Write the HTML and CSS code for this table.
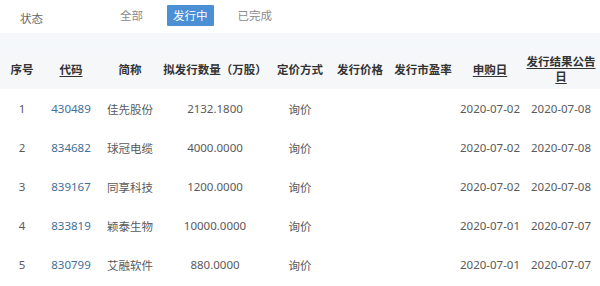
FILE: index.html
```html
<!DOCTYPE html>
<html lang="zh-CN">
<head>
<meta charset="utf-8">
<link rel="stylesheet" href="styles.css">
</head>
<body>
<div class="filter">
  <span class="label">状态</span>
  <div class="tabs">
    <span class="tab">全部</span>
    <span class="tab active">发行中</span>
    <span class="tab">已完成</span>
  </div>
</div>
<table class="grid">
  <colgroup>
    <col class="c1"><col class="c2"><col class="c3"><col class="c4"><col class="c5"><col class="c6"><col class="c7"><col class="c8"><col class="c9">
  </colgroup>
  <thead>
    <tr class="band"><td colspan="9"></td></tr>
    <tr class="head">
      <th>序号</th>
      <th><u>代码</u></th>
      <th>简称</th>
      <th>拟发行数量（万股）</th>
      <th>定价方式</th>
      <th>发行价格</th>
      <th>发行市盈率</th>
      <th><u>申购日</u></th>
      <th><u>发行结果公告日</u></th>
    </tr>
  </thead>
  <tbody>
    <tr><td>1</td><td class="code">430489</td><td>佳先股份</td><td>2132.1800</td><td>询价</td><td></td><td></td><td>2020-07-02</td><td>2020-07-08</td></tr>
    <tr><td>2</td><td class="code">834682</td><td>球冠电缆</td><td>4000.0000</td><td>询价</td><td></td><td></td><td>2020-07-02</td><td>2020-07-08</td></tr>
    <tr><td>3</td><td class="code">839167</td><td>同享科技</td><td>1200.0000</td><td>询价</td><td></td><td></td><td>2020-07-02</td><td>2020-07-08</td></tr>
    <tr><td>4</td><td class="code">833819</td><td>颖泰生物</td><td>10000.0000</td><td>询价</td><td></td><td></td><td>2020-07-01</td><td>2020-07-07</td></tr>
    <tr><td>5</td><td class="code">830799</td><td>艾融软件</td><td>880.0000</td><td>询价</td><td></td><td></td><td>2020-07-01</td><td>2020-07-07</td></tr>
  </tbody>
</table>
</body>
</html>
```
FILE: styles.css
```css
html, body {
  margin: 0;
  padding: 0;
  background: #ffffff;
}
body {
  font-family: "Noto Sans", "Noto Sans CJK SC", sans-serif;
  font-size: 11.5px;
  color: #555;
  width: 600px;
  overflow: hidden;
}
.filter {
  height: 33px;
  display: flex;
  align-items: center;
  padding-left: 20px;
  box-sizing: border-box;
}
.label {
  color: #666;
  width: 100px;
  margin-top: 3px;
}
.tabs {
  display: flex;
  align-items: center;
  margin-top: -2px;
}
.tab {
  color: #8a8a8a;
  padding: 0 12px;
  line-height: 21px;
  height: 21px;
}
.tab:first-child {
  padding-left: 0;
  margin-right: 12px;
}
.tab.active {
  background: #4b8fd5;
  color: #fff;
  padding: 0 6px;
  border-radius: 1px;
  margin-right: 12px;
}
.grid {
  width: 600px;
  border-collapse: collapse;
  table-layout: fixed;
}
.c1 { width: 44px; }
.c2 { width: 54px; }
.c3 { width: 64px; }
.c4 { width: 106px; }
.c5 { width: 64px; }
.c6 { width: 56px; }
.c7 { width: 70px; }
.c8 { width: 64px; }
.c9 { width: 78px; }
.band td {
  height: 17px;
  padding: 0;
  background: #f4f8fa;
}
.head th {
  height: 38px;
  padding: 0 0 1px;
  background: #f5f7f9;
  color: #333;
  font-weight: bold;
  line-height: 15px;
  text-align: center;
  vertical-align: middle;
  white-space: normal;
}
.head th u {
  text-decoration-thickness: 1px;
  text-underline-offset: 2px;
}
tbody td {
  height: 39px;
  padding: 0;
  text-align: center;
  vertical-align: middle;
  white-space: nowrap;
  color: #5a5a5a;
}
tbody td.code {
  color: #3f6f98;
}
```
